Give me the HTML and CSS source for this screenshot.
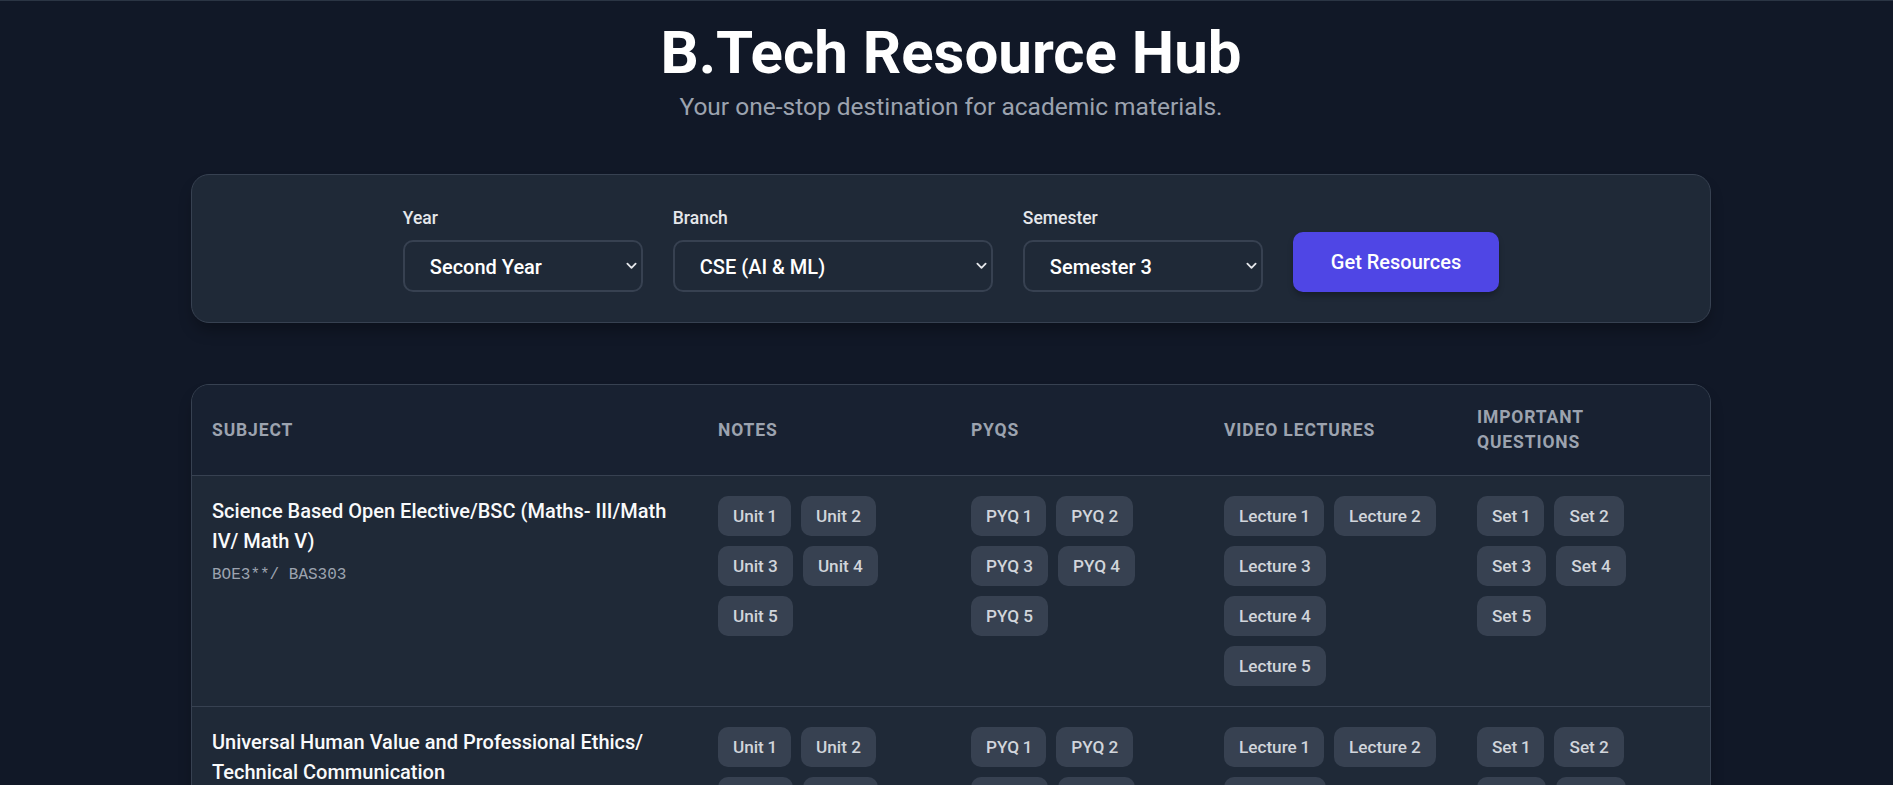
FILE: index.html
```html
<!DOCTYPE html>
<html lang="en">
<head>
<meta charset="utf-8">
<title>B.Tech Resource Hub</title>
<link rel="stylesheet" href="styles.css">
</head>
<body>
<main class="page">
  <header class="hero">
    <h1 class="hero-title">B.Tech Resource Hub</h1>
    <p class="hero-sub">Your one-stop destination for academic materials.</p>
  </header>

  <section class="filters">
    <div class="field">
      <label class="field-label" for="year">Year</label>
      <div class="select-wrap">
        <select id="year" class="select">
          <option>First Year</option>
          <option selected>Second Year</option>
          <option>Third Year</option>
          <option>Fourth Year</option>
        </select>
        <svg class="chevron" viewBox="0 0 12 8"><path d="M1.5 1.5 6 6l4.5-4.5"/></svg>
      </div>
    </div>
    <div class="field">
      <label class="field-label" for="branch">Branch</label>
      <div class="select-wrap">
        <select id="branch" class="select select-wide">
          <option>CSE</option>
          <option selected>CSE (AI &amp; ML)</option>
          <option>IT</option>
          <option>ECE</option>
        </select>
        <svg class="chevron" viewBox="0 0 12 8"><path d="M1.5 1.5 6 6l4.5-4.5"/></svg>
      </div>
    </div>
    <div class="field">
      <label class="field-label" for="sem">Semester</label>
      <div class="select-wrap">
        <select id="sem" class="select">
          <option selected>Semester 3</option>
          <option>Semester 4</option>
        </select>
        <svg class="chevron" viewBox="0 0 12 8"><path d="M1.5 1.5 6 6l4.5-4.5"/></svg>
      </div>
    </div>
    <button class="btn" type="button">Get Resources</button>
  </section>

  <section class="table-card">
    <table class="res-table">
      <colgroup>
        <col class="col-subject"><col class="col-res"><col class="col-res"><col class="col-res"><col class="col-res">
      </colgroup>
      <thead>
        <tr>
          <th>Subject</th>
          <th>Notes</th>
          <th>PYQs</th>
          <th>Video Lectures</th>
          <th>Important Questions</th>
        </tr>
      </thead>
      <tbody>
        <tr>
          <td>
            <div class="subj-name">Science Based Open Elective/BSC (Maths- III/Math IV/ Math V)</div>
            <div class="subj-code">BOE3**/ BAS303</div>
          </td>
          <td><div class="pills"><a class="pill" href="#">Unit 1</a><a class="pill" href="#">Unit 2</a><a class="pill" href="#">Unit 3</a><a class="pill" href="#">Unit 4</a><a class="pill" href="#">Unit 5</a></div></td>
          <td><div class="pills"><a class="pill" href="#">PYQ 1</a><a class="pill" href="#">PYQ 2</a><a class="pill" href="#">PYQ 3</a><a class="pill" href="#">PYQ 4</a><a class="pill" href="#">PYQ 5</a></div></td>
          <td><div class="pills"><a class="pill" href="#">Lecture 1</a><a class="pill" href="#">Lecture 2</a><a class="pill" href="#">Lecture 3</a><a class="pill" href="#">Lecture 4</a><a class="pill" href="#">Lecture 5</a></div></td>
          <td><div class="pills"><a class="pill" href="#">Set 1</a><a class="pill" href="#">Set 2</a><a class="pill" href="#">Set 3</a><a class="pill" href="#">Set 4</a><a class="pill" href="#">Set 5</a></div></td>
        </tr>
        <tr>
          <td>
            <div class="subj-name">Universal Human Value and Professional Ethics/ Technical Communication</div>
            <div class="subj-code">BVE301/ BAS301</div>
          </td>
          <td><div class="pills"><a class="pill" href="#">Unit 1</a><a class="pill" href="#">Unit 2</a><a class="pill" href="#">Unit 3</a><a class="pill" href="#">Unit 4</a><a class="pill" href="#">Unit 5</a></div></td>
          <td><div class="pills"><a class="pill" href="#">PYQ 1</a><a class="pill" href="#">PYQ 2</a><a class="pill" href="#">PYQ 3</a><a class="pill" href="#">PYQ 4</a><a class="pill" href="#">PYQ 5</a></div></td>
          <td><div class="pills"><a class="pill" href="#">Lecture 1</a><a class="pill" href="#">Lecture 2</a><a class="pill" href="#">Lecture 3</a><a class="pill" href="#">Lecture 4</a><a class="pill" href="#">Lecture 5</a></div></td>
          <td><div class="pills"><a class="pill" href="#">Set 1</a><a class="pill" href="#">Set 2</a><a class="pill" href="#">Set 3</a><a class="pill" href="#">Set 4</a><a class="pill" href="#">Set 5</a></div></td>
        </tr>
      </tbody>
    </table>
  </section>
</main>
</body>
</html>
```

FILE: styles.css
```css
* { box-sizing: border-box; }

body {
  margin: 0;
  background: #111827;
  border-top: 1px solid #2b3544;
  font-family: Roboto, "Noto Sans", sans-serif;
  color: #ffffff;
}

.page {
  margin: 0 182px 0 191px;
  padding-bottom: 60px;
}

.hero {
  text-align: center;
  padding-top: 16px;
}

.hero-title {
  margin: 0;
  font-size: 60px;
  line-height: 72px;
  font-weight: 700;
  color: #ffffff;
}

.hero-sub {
  margin: 2px 0 0;
  font-size: 24.5px;
  line-height: 32px;
  color: #9ca3af;
}

.filters {
  margin-top: 51px;
  background: #1f2937;
  border: 1px solid #374151;
  border-radius: 18px;
  padding: 31px 30px 30px;
  display: flex;
  justify-content: center;
  align-items: flex-end;
  gap: 30px;
  box-shadow: 0 10px 15px -3px rgba(0, 0, 0, 0.3);
}

.field {
  display: flex;
  flex-direction: column;
}

.field-label {
  font-size: 17.5px;
  line-height: 25px;
  font-weight: 500;
  color: #e5e7eb;
  margin-bottom: 9px;
}

.select-wrap {
  position: relative;
}

.select {
  appearance: none;
  -webkit-appearance: none;
  display: block;
  width: 240px;
  height: 52px;
  padding: 2px 25px 0;
  background: #1f2937;
  border: 2px solid #374151;
  border-radius: 10px;
  color: #ffffff;
  font-family: inherit;
  font-size: 20px;
  font-weight: 500;
  outline: none;
}

.select-wide {
  width: 320px;
}

.chevron {
  position: absolute;
  right: 6px;
  top: 50%;
  width: 11px;
  height: 8px;
  margin-top: -4px;
  fill: none;
  stroke: #e5e7eb;
  stroke-width: 2;
  stroke-linecap: round;
  stroke-linejoin: round;
  pointer-events: none;
}

.btn {
  height: 60px;
  padding: 0 38px;
  background: #4f46e5;
  color: #ffffff;
  border: 0;
  border-radius: 10px;
  font-family: inherit;
  font-size: 20px;
  font-weight: 500;
  box-shadow: 0 4px 6px -1px rgba(0, 0, 0, 0.3);
}

.table-card {
  margin-top: 61px;
  background: #1f2937;
  border: 1px solid #374151;
  border-radius: 18px;
  overflow: hidden;
  box-shadow: 0 10px 15px -3px rgba(0, 0, 0, 0.3);
}

.res-table {
  width: 100%;
  border-collapse: collapse;
  table-layout: fixed;
}

.col-subject { width: 33.33%; }
.col-res { width: 16.67%; }

.res-table th {
  background: #182131;
  padding: 20px;
  text-align: left;
  vertical-align: middle;
  font-size: 17.5px;
  line-height: 25px;
  font-weight: 700;
  letter-spacing: 0.05em;
  text-transform: uppercase;
  color: #9ca3af;
  border-bottom: 1px solid #374151;
}

.res-table td {
  padding: 20px;
  vertical-align: top;
  border-bottom: 1px solid #374151;
}

.subj-name {
  font-size: 20px;
  line-height: 30px;
  font-weight: 500;
  color: #f9fafb;
}

.subj-code {
  margin-top: 7px;
  font-family: "Liberation Mono", monospace;
  font-size: 16px;
  line-height: 25px;
  color: #9ca3af;
}

.pills {
  display: flex;
  flex-wrap: wrap;
  gap: 10px;
}

.pill {
  display: inline-block;
  padding: 7.5px 15px;
  line-height: 25px;
  font-size: 17.2px;
  font-weight: 500;
  font-variant-numeric: proportional-nums;
  color: #d1d5db;
  background: #374151;
  border-radius: 10px;
  text-decoration: none;
  white-space: nowrap;
}
```
